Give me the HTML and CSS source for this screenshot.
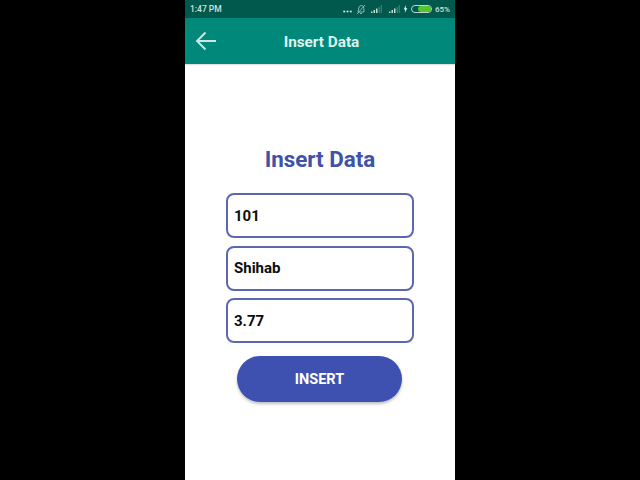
FILE: index.html
```html
<!DOCTYPE html>
<html lang="en">
<head>
    <meta charset="UTF-8">
    <title>Insert Data</title>
    <link rel="stylesheet" href="styles.css">
</head>
<body>
    <div class="phone">
        <div class="status-bar">
            <span class="time">1:47 PM</span>
            <div class="status-icons">
                <svg class="dots" width="9" height="3" viewBox="0 0 9 3"><circle cx="1.2" cy="1.5" r="1.1"/><circle cx="4.5" cy="1.5" r="1.1"/><circle cx="7.8" cy="1.5" r="1.1"/></svg>
                <svg class="bell" width="10" height="11" viewBox="0 0 10 11"><path d="M2 8 L2.8 4 Q3.4 1.5 5.5 1.5 Q7.8 1.7 7.8 4.2 L8 8 Z M4 9.5 H6 M1 10 L9 1" fill="none" stroke="#a9cbc3" stroke-width="0.8"/></svg>
                <svg class="signal" width="11" height="8" viewBox="0 0 11 8"><path d="M0 6.5h1.5V8H0z M2.5 5H4v3H2.5z M5 3.5h1.5V8H5z" fill="#c4dcd6"/><path d="M7.5 2H9v6H7.5z M9.6 0H11v8H9.6z" fill="#2f7f6f"/></svg>
                <svg class="signal second" width="11" height="8" viewBox="0 0 11 8"><path d="M0 6.5h1.5V8H0z M2.5 5H4v3H2.5z M5 3.5h1.5V8H5z" fill="#c4dcd6"/><path d="M7.5 2H9v6H7.5z M9.6 0H11v8H9.6z" fill="#2f7f6f"/></svg>
                <svg class="bolt" width="5" height="8" viewBox="0 0 5 9"><path d="M3.2 0 L0.4 5 H2.2 L1.6 9 L4.6 3.6 H2.8 Z" fill="#e6f1ee"/></svg>
                <div class="battery"><div class="battery-fill"></div></div>
                <span class="percent">65%</span>
            </div>
        </div>
        <div class="app-bar">
            <svg class="back" width="22" height="20" viewBox="0 0 22 20"><path d="M21 10 H2 M10.5 1.5 L2 10 L10.5 18.5" fill="none" stroke="#c8e8e1" stroke-width="1.9"/></svg>
            <span class="app-title">Insert Data</span>
        </div>
        <div class="content">
            <h1>Insert Data</h1>
            <div class="field">101</div>
            <div class="field">Shihab</div>
            <div class="field">3.77</div>
            <button class="insert-btn">INSERT</button>
        </div>
    </div>
</body>
</html>
```

FILE: styles.css
```css
html, body {
    margin: 0;
    padding: 0;
    height: 100%;
    background: #000;
    overflow: hidden;
}

body {
    font-family: Roboto, "Liberation Sans", sans-serif;
}

.phone {
    width: 270px;
    height: 480px;
    margin: 0 auto;
    background: #fff;
    display: flex;
    flex-direction: column;
}

.status-bar {
    height: 18px;
    background: #00594c;
    color: #cfe2dd;
    display: flex;
    align-items: center;
    justify-content: space-between;
    padding: 0 5px;
    font-size: 8.5px;
    font-weight: 500;
}

.status-icons {
    display: flex;
    align-items: center;
}

.dots {
    fill: #cfe2dd;
    margin-top: 4px;
}

.bell {
    margin-left: 4px;
}

.signal {
    margin-left: 5px;
}

.signal.second {
    margin-left: 7px;
}

.bolt {
    margin-left: 3px;
}

.battery {
    width: 19px;
    height: 6px;
    border: 1px solid #b9d6cf;
    border-radius: 4px;
    margin-left: 3px;
    display: flex;
    justify-content: flex-end;
}

.battery-fill {
    width: 13px;
    background: #55c52d;
    border-radius: 3px;
}

.percent {
    margin-left: 3px;
    font-size: 8px;
}

.app-bar {
    height: 46px;
    background: #00897b;
    display: flex;
    align-items: center;
    position: relative;
    box-shadow: 0 1px 1px rgba(0, 0, 0, 0.12);
}

.back {
    margin-left: 10px;
}

.app-title {
    color: #dff2ee;
    font-size: 15.3px;
    font-weight: 700;
    position: absolute;
    left: 0;
    right: 0;
    text-align: center;
    top: 15px;
    padding-left: 3px;
}

.content {
    display: flex;
    flex-direction: column;
    align-items: center;
    padding-top: 80px;
}

h1 {
    margin: 0 0 19px;
    color: #3f51a8;
    font-size: 22.4px;
    line-height: 30px;
    font-weight: 700;
}

.field {
    width: 188px;
    height: 45px;
    box-sizing: border-box;
    border: 2px solid #5c67ad;
    border-radius: 8px;
    margin-bottom: 7.5px;
    padding-left: 6px;
    display: flex;
    align-items: center;
    color: #0c0c0c;
    font-size: 15px;
    font-weight: 700;
}

.insert-btn {
    width: 165px;
    height: 46px;
    margin: 5.5px 1px 0 0;
    border: none;
    border-radius: 23px;
    background: #3f51b0;
    color: #fff;
    font-family: inherit;
    font-size: 14.5px;
    font-weight: 700;
    box-shadow: 0 2px 3px rgba(0, 0, 0, 0.25);
}
```
